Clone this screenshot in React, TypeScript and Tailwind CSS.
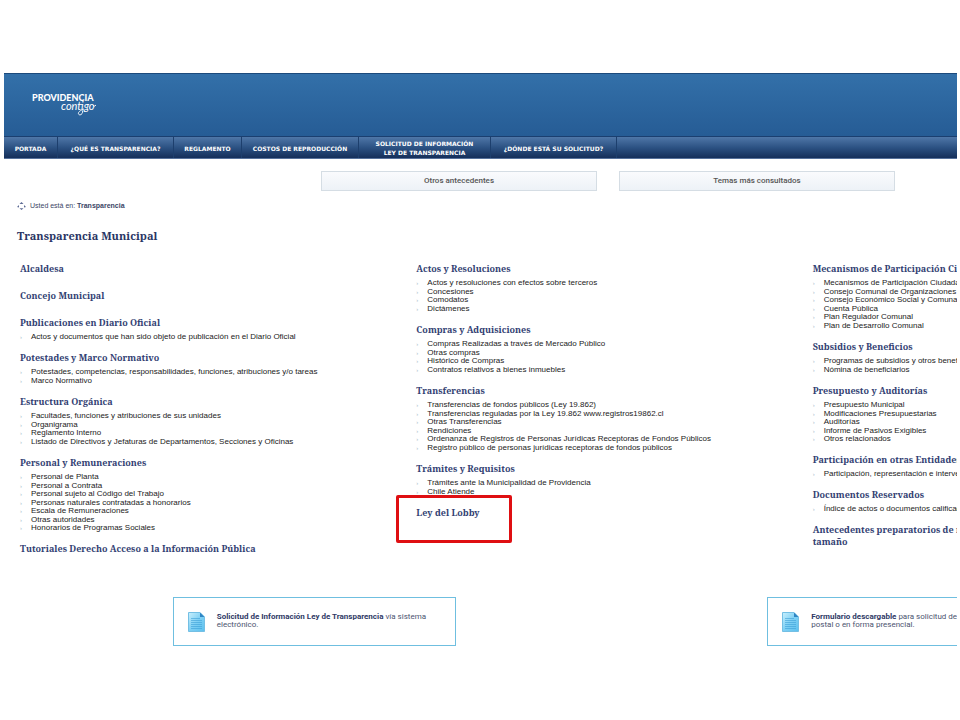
import React from 'react';

type Section = {
  title: React.ReactNode;
  items?: string[];
  highlighted?: boolean;
};

const tabs = [
  { label: 'PORTADA', width: 'w-[54px]' },
  { label: '¿QUÉ ES TRANSPARENCIA?', width: 'w-[116px]' },
  { label: 'REGLAMENTO', width: 'w-[68px]' },
  { label: 'COSTOS DE REPRODUCCIÓN', width: 'w-[117px]' },
  { label: <>SOLICITUD DE INFORMACIÓN<br />LEY DE TRANSPARENCIA</>, width: 'w-[132px]' },
  { label: '¿DÓNDE ESTÁ SU SOLICITUD?', width: 'w-[126px]' },
];

const columns: Section[][] = [
  [
    { title: 'Alcaldesa' },
    { title: 'Concejo Municipal' },
    {
      title: 'Publicaciones en Diario Oficial',
      items: ['Actos y documentos que han sido objeto de publicación en el Diario Oficial'],
    },
    {
      title: 'Potestades y Marco Normativo',
      items: [
        'Potestades, competencias, responsabilidades, funciones, atribuciones y/o tareas',
        'Marco Normativo',
      ],
    },
    {
      title: 'Estructura Orgánica',
      items: [
        'Facultades, funciones y atribuciones de sus unidades',
        'Organigrama',
        'Reglamento Interno',
        'Listado de Directivos y Jefaturas de Departamentos, Secciones y Oficinas',
      ],
    },
    {
      title: 'Personal y Remuneraciones',
      items: [
        'Personal de Planta',
        'Personal a Contrata',
        'Personal sujeto al Código del Trabajo',
        'Personas naturales contratadas a honorarios',
        'Escala de Remuneraciones',
        'Otras autoridades',
        'Honorarios de Programas Sociales',
      ],
    },
    { title: 'Tutoriales Derecho Acceso a la Información Pública' },
  ],
  [
    {
      title: 'Actos y Resoluciones',
      items: [
        'Actos y resoluciones con efectos sobre terceros',
        'Concesiones',
        'Comodatos',
        'Dictámenes',
      ],
    },
    {
      title: 'Compras y Adquisiciones',
      items: [
        'Compras Realizadas a través de Mercado Público',
        'Otras compras',
        'Histórico de Compras',
        'Contratos relativos a bienes inmuebles',
      ],
    },
    {
      title: 'Transferencias',
      items: [
        'Transferencias de fondos públicos (Ley 19.862)',
        'Transferencias reguladas por la Ley 19.862 www.registros19862.cl',
        'Otras Transferencias',
        'Rendiciones',
        'Ordenanza de Registros de Personas Jurídicas Receptoras de Fondos Públicos',
        'Registro público de personas jurídicas receptoras de fondos públicos',
      ],
    },
    {
      title: 'Trámites y Requisitos',
      items: ['Trámites ante la Municipalidad de Providencia', 'Chile Atiende'],
    },
    { title: 'Ley del Lobby', highlighted: true },
  ],
  [
    {
      title: 'Mecanismos de Participación Ciudadana',
      items: [
        'Mecanismos de Participación Ciudadana',
        'Consejo Comunal de Organizaciones de',
        'Consejo Económico Social y Comunal',
        'Cuenta Pública',
        'Plan Regulador Comunal',
        'Plan de Desarrollo Comunal',
      ],
    },
    {
      title: 'Subsidios y Beneficios',
      items: ['Programas de subsidios y otros beneficios', 'Nómina de beneficiarios'],
    },
    {
      title: 'Presupuesto y Auditorías',
      items: [
        'Presupuesto Municipal',
        'Modificaciones Presupuestarias',
        'Auditorías',
        'Informe de Pasivos Exigibles',
        'Otros relacionados',
      ],
    },
    {
      title: 'Participación en otras Entidades',
      items: ['Participación, representación e intervención'],
    },
    {
      title: 'Documentos Reservados',
      items: ['Índice de actos o documentos calificados'],
    },
    { title: <>Antecedentes preparatorios de normas<br />tamaño</> },
  ],
];

const Logo = () => (
  <a href="#" aria-label="Providencia contigo" className="block w-fit">
    <svg width="72" height="28" viewBox="0 0 72 28" fill="#fff">
      <text x="0" y="9" fontSize="9" fontWeight="900" className="font-['Lato',sans-serif]">
        PROVIDENCIA
      </text>
      <text x="29" y="18" fontSize="11" fontStyle="italic" fontWeight="400" className="font-['Lato',sans-serif]">
        contigo
      </text>
      <path d="M50.500 18.500c1 3-2.500 6-4 3.500-.8-2 2.500-4 5.500-5M61 13.500q2 1.500 3-.5" fill="none" stroke="#fff" strokeWidth=".9" />
    </svg>
  </a>
);

const CompassIcon = () => (
  <svg width="9" height="8" viewBox="0 0 9 8" fill="#5d6b94" aria-hidden="true">
    <path d="M4.500 0 6.500 2h-4zM4.500 8l-2-1.800h4zM0 5l2-2v2.500zM9 5 7 3v2.500z" />
  </svg>
);

const DocumentIcon = () => (
  <svg width="17" height="20" viewBox="0 0 17 20" className="shrink-0" aria-hidden="true">
    <defs>
      <linearGradient id="sheet" x1="0" y1="0" x2="1" y2="1">
        <stop offset="0" stopColor="#c9f0fd" />
        <stop offset="0.5" stopColor="#7fd0f4" />
        <stop offset="1" stopColor="#5cc0ee" />
      </linearGradient>
    </defs>
    <path d="M.5.5H12L16.500 5v14.500H.5z" fill="url(#sheet)" stroke="#74bfe4" />
    <path d="M12 .5V5h4.500z" fill="#2f86c4" />
    <path d="M3 6.500h9M3 8.500h11M3 10.500h11M3 12.500h11M3 14.500h11M3 16.500h11" stroke="#3d9fd6" strokeWidth=".6" />
  </svg>
);

const SectionBlock = ({ title, items = [], highlighted }: Section) => (
  <section className="relative pb-[11px]">
    <h2 className="font-['Noto_Serif','Droid_Serif','DejaVu_Serif_Condensed','DejaVu_Serif',serif] text-[9px] font-bold leading-[12px] text-[#333f73]">
      <a href="#">{title}</a>
    </h2>
    <ul className="pt-1">
      {items.map((item) => (
        <li key={item} className="flex items-center text-[8px] leading-[8px] text-[#222] even:leading-[9px]">
          <span className="w-[11px] text-[6px] leading-none text-[#a9bccb]" aria-hidden="true">›</span>
          <a href="#">{item}</a>
        </li>
      ))}
    </ul>
    {highlighted && (
      <div className="pointer-events-none absolute -left-5 -top-3 h-12 w-[116px] rounded-[2px] border-[3px] border-[#df0f12]" />
    )}
  </section>
);

const RequestBox = ({ children }: { children: React.ReactNode }) => (
  <a
    href="#"
    className="flex h-[49px] w-[283px] items-center gap-3 border border-[#6fbfe0] pl-[14px] font-['Roboto',sans-serif] text-[8px] leading-[8px] text-[#4c5470]"
  >
    <DocumentIcon />
    <span className="pb-[2px]">{children}</span>
  </a>
);

export default function App() {
  return (
    <div className="overflow-hidden bg-white pb-[74px] pl-1 pr-[3px] pt-[73px] font-['Liberation_Sans',Arial,sans-serif]">
      <div className="overflow-hidden">
        <div className="min-w-[1208px] whitespace-nowrap">
          <header>
            <div className="h-[63px] border-t border-[#1c4a7c] bg-linear-to-b from-[#3370a9] to-[#265c95] pl-7 pt-[18px]">
              <Logo />
            </div>
            <nav className="flex h-[23px] border-b border-t border-b-[#56719b] border-t-[#1b3f70] bg-linear-to-b from-[#5077a8] via-[#2c5283] via-50% to-[#152f5a] font-['Verdana','DejaVu_Sans',sans-serif] text-[6px] font-bold leading-[9px] text-white">
              {tabs.map((tab) => (
                <a
                  key={tab.width}
                  href="#"
                  className={`${tab.width} flex items-center justify-center border-r border-[#1d3f6d] pt-px text-center`}
                >
                  <span>{tab.label}</span>
                </a>
              ))}
            </nav>
          </header>

          <main className="pl-[13px]">
            <div className="flex justify-center gap-[22px] pr-[13px] pt-3">
              {['Otros antecedentes', 'Temas más consultados'].map((label) => (
                <button
                  key={label}
                  type="button"
                  className="h-5 w-[276px] border border-[#d5dde4] bg-linear-to-b from-[#fafbfd] to-[#edf2f7] pb-[2px] font-['Roboto',sans-serif] text-[8px] font-medium leading-[9px] text-[#555]"
                >
                  {label}
                </button>
              ))}
            </div>

            <p className="flex items-center gap-1 pt-[10px] text-[7px] leading-[10px] text-[#3b4566]">
              <CompassIcon />
              <span>
                Usted está en: <a href="#" className="font-bold">Transparencia</a>
              </span>
            </p>

            <h1 className="pt-4 font-['Noto_Serif','Droid_Serif','DejaVu_Serif_Condensed','DejaVu_Serif',serif] text-[11px] font-bold leading-[18px] text-[#2a3564]">
              Transparencia Municipal
            </h1>

            <div className="grid grid-cols-3 pl-[3px] pr-[3px] pt-[18px]">
              {columns.map((sections, i) => (
                <div key={i}>
                  {sections.map((section, j) => (
                    <SectionBlock key={j} {...section} />
                  ))}
                </div>
              ))}
            </div>

            <div className="grid grid-cols-2 justify-items-center pr-[6px] pt-[27px]">
              <RequestBox>
                <b className="text-[#2f3a66]">Solicitud de Información Ley de Transparencia</b> vía sistema
                <br />
                electrónico.
              </RequestBox>
              <RequestBox>
                <b className="text-[#2f3a66]">Formulario descargable</b> para solicitud de
                <br />
                postal o en forma presencial.
              </RequestBox>
            </div>
          </main>
        </div>
      </div>
    </div>
  );
}
